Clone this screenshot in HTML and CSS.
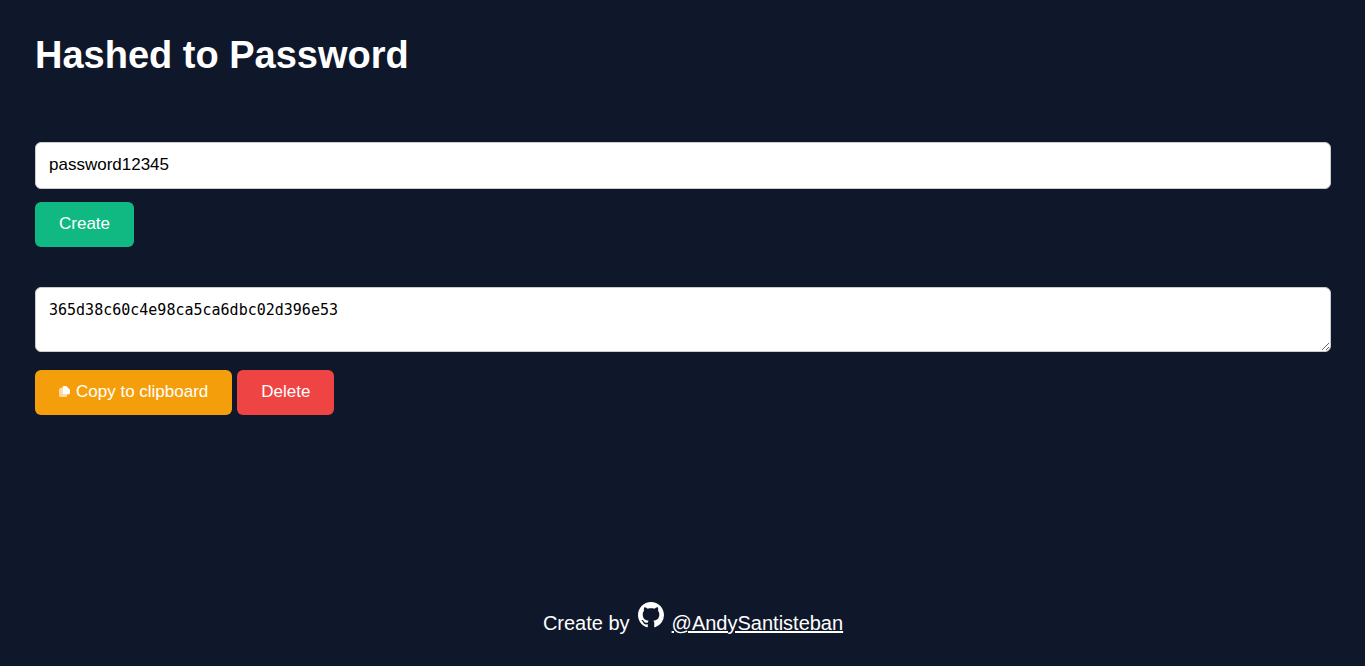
FILE: index.html
```html
<!DOCTYPE html>
<html lang="en">
<head>
<meta charset="utf-8">
<meta name="viewport" content="width=device-width, initial-scale=1">
<title>Hashed to Password</title>
<link rel="stylesheet" href="styles.css">
</head>
<body>
<main class="page">
  <h1 class="title">Hashed to Password</h1>
  <form class="group">
    <input class="field" type="text" value="password12345" aria-label="Password">
    <div class="actions"><button class="btn btn-create" type="button">Create</button></div>
  </form>
  <section class="group result">
    <textarea class="field output" aria-label="Hash" spellcheck="false">365d38c60c4e98ca5ca6dbc02d396e53</textarea>
    <div class="actions">
      <button class="btn btn-copy" type="button"><svg class="copy-icon" viewBox="0 0 12 12" aria-hidden="true"><rect x="0" y="2" width="9" height="10" rx="2" fill="#fff" opacity=".6"/><path d="M5 0h3l4 4v4a1 1 0 0 1-1 1H5a1 1 0 0 1-1-1V1a1 1 0 0 1 1-1z" fill="#fff"/></svg>Copy to clipboard</button>
      <button class="btn btn-delete" type="button">Delete</button>
    </div>
  </section>
</main>
<footer class="footer">
  <span>Create by</span>
  <svg class="github" viewBox="0 0 16 16" aria-hidden="true"><path fill="#fff" d="M8 0C3.58 0 0 3.58 0 8c0 3.54 2.29 6.53 5.47 7.59.4.07.55-.17.55-.38 0-.19-.01-.82-.01-1.49-2.01.37-2.53-.49-2.69-.94-.09-.23-.48-.94-.82-1.13-.28-.15-.68-.52-.01-.53.63-.01 1.08.58 1.23.82.72 1.21 1.87.87 2.33.66.07-.52.28-.87.51-1.07-1.78-.2-3.64-.89-3.64-3.95 0-.87.31-1.59.82-2.15-.08-.2-.36-1.02.08-2.12 0 0 .67-.21 2.2.82.64-.18 1.32-.27 2-.27s1.36.09 2 .27c1.53-1.04 2.2-.82 2.2-.82.44 1.1.16 1.92.08 2.12.51.56.82 1.27.82 2.15 0 3.07-1.87 3.75-3.65 3.95.29.25.54.73.54 1.48 0 1.07-.01 1.93-.01 2.2 0 .21.15.46.55.38A8.01 8.01 0 0 0 16 8c0-4.42-3.58-8-8-8z"/></svg>
  <a class="author" href="#">@AndySantisteban</a>
</footer>
</body>
</html>
```
FILE: styles.css
```css
* { box-sizing: border-box; }

body {
  margin: 0;
  min-height: 100vh;
  display: flex;
  flex-direction: column;
  justify-content: space-between;
  background: #0f172a;
  color: #fff;
  font-family: "Liberation Sans", Arial, sans-serif;
}

.page {
  display: flex;
  flex-direction: column;
  padding: 32px 34px 0 35px;
}

.title {
  margin: 0 0 64px;
  font-size: 38px;
  line-height: 46px;
}

.group {
  display: flex;
  flex-direction: column;
  gap: 13px;
}

.result {
  gap: 18px;
  margin-top: 40px;
}

.field {
  width: 100%;
  height: 47px;
  padding: 12px 13px 13px;
  border: 1px solid #ccc;
  border-radius: 6px;
  background: #fff;
  color: #000;
  font: 17px/20px "Liberation Sans", Arial, sans-serif;
}

.output {
  display: block;
  height: 65px;
  resize: vertical;
  font: 15px/20px "DejaVu Sans Mono", monospace;
}

.actions {
  display: flex;
  gap: 5px;
}

.btn {
  display: flex;
  align-items: center;
  height: 45px;
  padding: 0 24px 2px;
  border: 0;
  border-radius: 6px;
  color: #fff;
  font: 17px/20px "Liberation Sans", Arial, sans-serif;
  cursor: pointer;
}

.btn-create { background: #10b981; }
.btn-copy { background: #f59e0b; }
.btn-delete { background: #ef4444; }

.copy-icon {
  width: 11px;
  height: 11px;
  margin-right: 6px;
}

.footer {
  display: flex;
  justify-content: center;
  align-items: flex-end;
  gap: 8px;
  padding: 0 0 31px 21px;
  font-size: 20px;
  line-height: 24px;
}

.github {
  width: 26px;
  height: 26px;
  margin-bottom: 7px;
}

.author { color: #fff; }
```
